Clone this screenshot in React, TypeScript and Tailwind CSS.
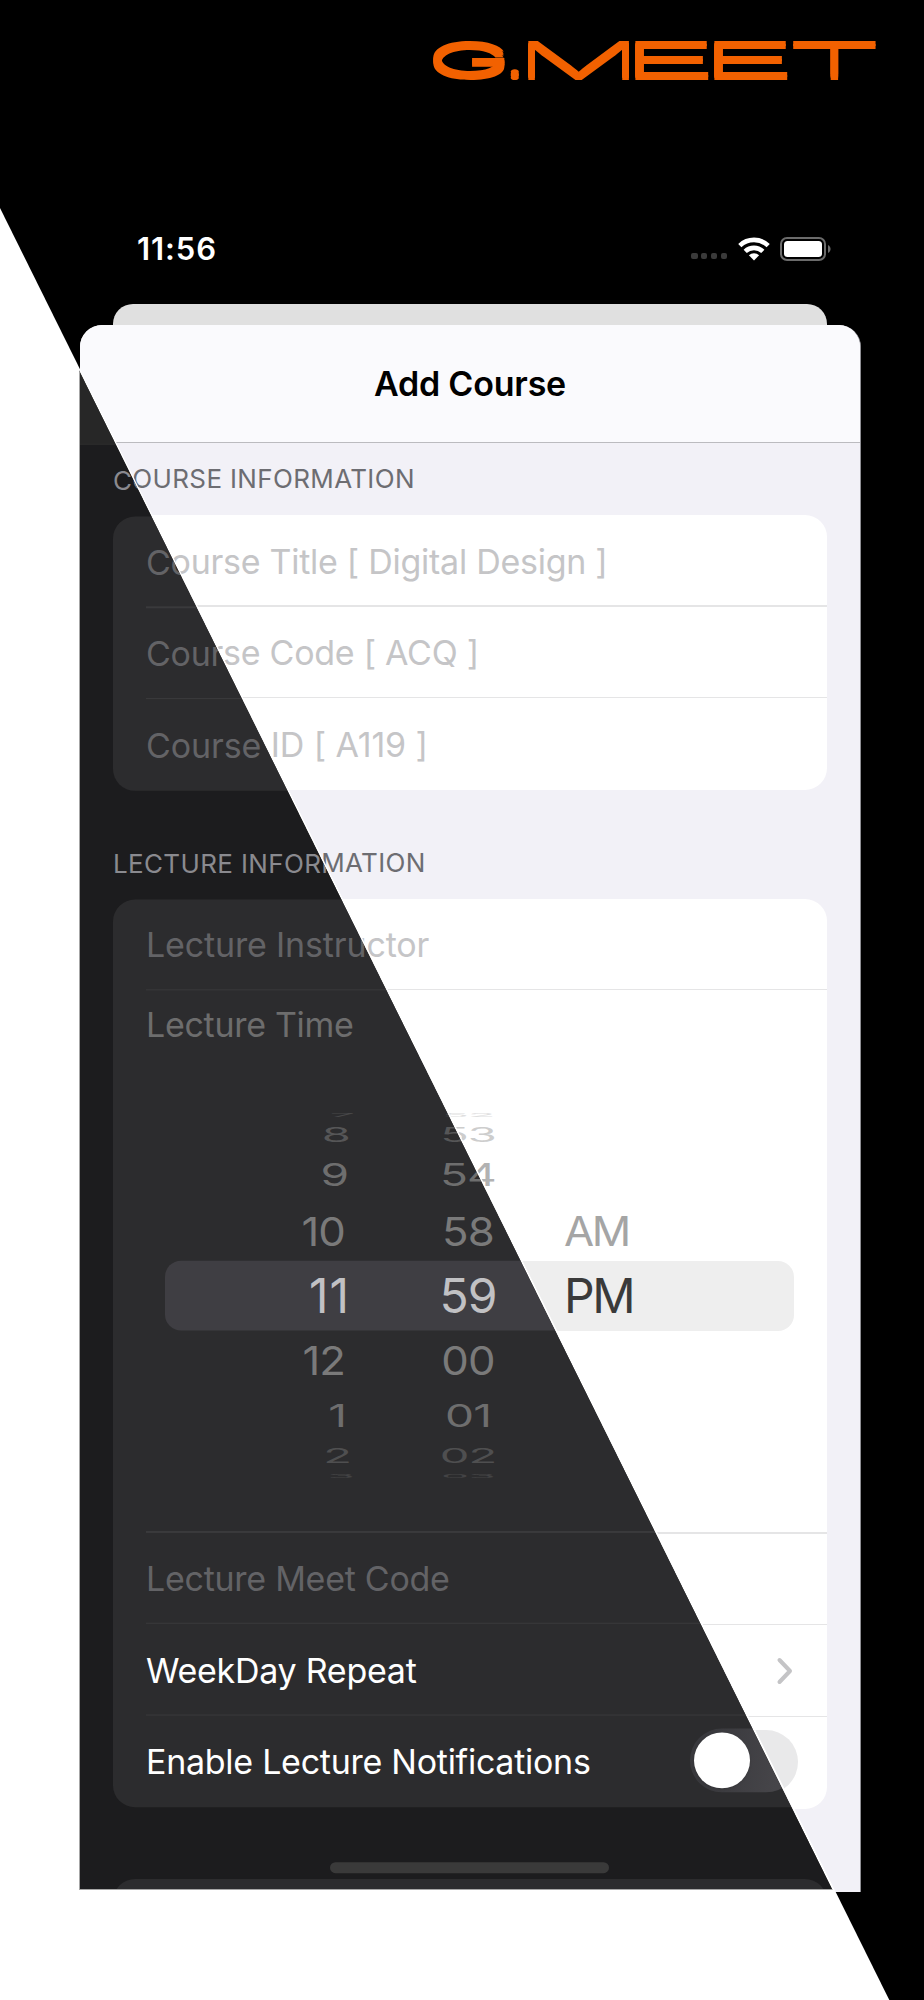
import { ReactNode } from "react";
import clsx from "clsx";

type Theme = {
  sheet: string;
  header: string;
  title: string;
  section: string;
  group: string;
  line: string;
  placeholder: string;
  caption: string;
  text: string;
  band: string;
  wheel: string;
  selected: string;
  track: string;
};

const LIGHT: Theme = {
  sheet: "bg-[#f2f1f7] border-r border-[#8f8f94]",
  header: "bg-[#fafafd] border-[#bbbbbf]",
  title: "text-black",
  section: "text-[#6d6d72]",
  group: "bg-white",
  line: "bg-[#e5e5e6]",
  placeholder: "text-[#c5c5c7]",
  caption: "text-[#a0a0a0]",
  text: "text-black",
  band: "bg-[#eeeeee]",
  wheel: "text-[#a5a5a5]",
  selected: "text-[#3a3a3a]",
  track: "bg-[#e9e9ea]",
};

const DARK: Theme = {
  sheet: "bg-[#1c1c1e] border-r border-[#1c1c1e]",
  header: "bg-[#272727] border-[#2c2c2d]",
  title: "text-white",
  section: "text-[#8a8a8f]",
  group: "bg-[#2c2c2e]",
  line: "bg-[#3a3a3c]",
  placeholder: "text-[#636366]",
  caption: "text-[#6d6d6d]",
  text: "text-white",
  band: "bg-[#3f3e43]",
  wheel: "text-[#7a7a7a]",
  selected: "text-[#c1c1c4]",
  track: "bg-[linear-gradient(100deg,#39393d_20%,#464549_80%)]",
};

// slot height, glyph scale and opacity for each step round the wheel
const SLOTS = [
  { box: "h-[14px]", glyph: "scale-x-[0.93] scale-y-[0.11] opacity-35" },
  { box: "h-[26px]", glyph: "scale-x-[0.98] scale-y-[0.41] opacity-55" },
  { box: "h-[54px]", glyph: "scale-x-[0.96] scale-y-[0.66] opacity-85" },
  { box: "h-[59px]", glyph: "scale-x-[0.91] scale-y-[0.84]" },
  { box: "h-[70px]", glyph: "scale-100" },
  { box: "h-[59px]", glyph: "scale-x-[0.91] scale-y-[0.84]" },
  { box: "h-[54px]", glyph: "scale-x-[0.96] scale-y-[0.66] opacity-85" },
  { box: "h-[26px]", glyph: "scale-x-[0.98] scale-y-[0.41] opacity-45" },
  { box: "h-[14px]", glyph: "scale-x-[0.93] scale-y-[0.11] opacity-30" },
];

const HOURS = ["7", "8", "9", "10", "11", "12", "1", "2", "3"];
const HOUR_SHIFT = ["pr-0", "pr-1", "pr-1.5", "pr-[9px]", "pr-[4px]", "pr-[9px]", "pr-2", "pr-[3px]", "pr-0"];
const MINUTES = ["52", "53", "54", "58", "59", "00", "01", "02", "03"];
const PERIODS = ["", "", "", "AM", "PM", "", "", "", ""];

function Wheel({ t, items, className, shift, origin }: { t: Theme; items: string[]; className: string; shift?: string[]; origin: string }) {
  return (
    <div className={clsx("flex flex-col", className)}>
      {items.map((v, i) => (
        <div key={i} className={clsx("flex items-center", SLOTS[i].box, shift?.[i])}>
          <span
            className={clsx(
              "flex-1 text-[48px] leading-none",
              v === "11" && "tracking-[1px]",
              origin,
              SLOTS[i].glyph,
              i === 4 ? t.selected : t.wheel
            )}
          >
            {v}
          </span>
        </div>
      ))}
    </div>
  );
}

function Row({ t, last, children }: { t: Theme; last?: boolean; children: ReactNode }) {
  return (
    <div className="h-[91.6px] flex flex-col pl-[33px]">
      <div className="flex-1 flex items-center pt-[3px] text-[34px] leading-none tracking-[-0.27px] whitespace-nowrap">{children}</div>
      {!last && <div className={clsx("h-[1.5px]", t.line)} />}
    </div>
  );
}

function Section({ t, className, children }: { t: Theme; className: string; children: ReactNode }) {
  return (
    <div className={clsx("flex items-end pl-[33px] text-[26px] leading-[72px] tracking-[0.35px]", t.section, className)}>
      {children}
    </div>
  );
}

function Sheet({ t }: { t: Theme }) {
  return (
    <div className={clsx("w-[781px] h-[1567px] rounded-t-[22px] overflow-hidden flex flex-col", t.sheet)}>
      <div className={clsx("h-[118px] shrink-0 border-b flex items-center justify-center text-[34px] font-semibold tracking-[-0.2px]", t.header, t.title)}>
        Add Course
      </div>

      <Section t={t} className="h-[72px] shrink-0">COURSE INFORMATION</Section>
      <div className={clsx("mx-[33px] shrink-0 rounded-[22px] overflow-hidden", t.group)}>
        <Row t={t}><span className={t.placeholder}>Course Title [ Digital Design ]</span></Row>
        <Row t={t}><span className={t.placeholder}>Course Code [ ACQ ]</span></Row>
        <Row t={t} last><span className={clsx("tracking-[-0.1px]", t.placeholder)}>Course ID [ A119 ]</span></Row>
      </div>

      <Section t={t} className="h-[109px] shrink-0">LECTURE INFORMATION</Section>
      <div className={clsx("mx-[33px] shrink-0 rounded-[22px] overflow-hidden", t.group)}>
        <Row t={t}><span className={clsx("tracking-[-0.15px]", t.placeholder)}>Lecture Instructor</span></Row>
        <div className="h-[543.5px] flex flex-col pl-[33px]">
          <div className={clsx("pt-[18px] text-[34px] leading-[34px] tracking-[-0.3px]", t.caption)}>Lecture Time</div>
          <div className="mt-[66px] w-[648px] grid">
            <div className={clsx("col-start-1 row-start-1 self-center ml-[19px] w-[629px] h-[70px] rounded-[16px]", t.band)} />
            <div className="col-start-1 row-start-1 flex">
              <Wheel t={t} items={HOURS} shift={HOUR_SHIFT} className="w-[208px] text-right tracking-[-1px]" origin="origin-right" />
              <Wheel t={t} items={MINUTES} className="ml-[72px] w-[84px] text-center tracking-[-1px]" origin="origin-center" />
              <Wheel t={t} items={PERIODS} className="ml-[54px] w-[120px] tracking-[-2.5px]" origin="origin-left" />
            </div>
          </div>
          <div className={clsx("mt-auto h-[1.5px]", t.line)} />
        </div>
        <Row t={t}><span className={t.placeholder}>Lecture Meet Code</span></Row>
        <Row t={t}>
          <span className={t.text}>WeekDay Repeat</span>
          <svg className="ml-auto mr-[34px] -mt-[2px]" width="17" height="28" viewBox="0 0 17 28" fill="none" stroke="#c4c4c6" strokeWidth="4" strokeLinecap="round" strokeLinejoin="round">
            <path d="M3.5 3 14 14 3.5 25" />
          </svg>
        </Row>
        <Row t={t} last>
          <span className={t.text}>Enable Lecture Notifications</span>
          <span className={clsx("ml-auto mr-[29px] -mt-[4px] w-[108px] h-[64px] rounded-full p-1 flex", t.track)}>
            <span className="size-[56px] rounded-full bg-white shadow" />
          </span>
        </Row>
      </div>

      <div className="mt-[55px] ml-[250px] w-[279px] h-[11px] shrink-0 rounded-full bg-[#3a3a3a]" />
      <div className={clsx("mt-[6px] mx-[33px] h-[60px] shrink-0 rounded-[22px]", t.group)} />
    </div>
  );
}

// thin strokes widened by the scale, thickened vertically by the shadow
const LOGO = [
  { c: "G", box: "w-[78px]", glyph: "scale-x-[2.58] font-light" },
  { c: ".", box: "w-[9px]", glyph: "scale-x-[1.7] font-light" },
  { c: "M", box: "w-[104px]", glyph: "scale-x-[3.25] font-extralight" },
  { c: "E", box: "w-[79px]", glyph: "scale-x-[3.9] font-extralight" },
  { c: "E", box: "w-[88px]", glyph: "scale-x-[3.9] font-extralight" },
  { c: "T", box: "w-[90px]", glyph: "scale-x-[3.58] font-extralight" },
];

function Logo() {
  return (
    <h1 className="mt-[31px] ml-[426px] h-[59px] flex text-[45px] leading-[60px] text-[#f26100] [text-shadow:0_2.6px_0_#f26100,0_-2.6px_0_#f26100,0_1.2px_0_#f26100,0_-1.2px_0_#f26100]">
      {LOGO.map((l, i) => (
        <span key={i} className={clsx("flex", l.box)}>
          <span className={clsx("origin-left", l.glyph)}>{l.c}</span>
        </span>
      ))}
    </h1>
  );
}

function StatusBar() {
  return (
    <div className="mt-[128px] h-[62px] pl-[137px] pr-[92px] pb-[1px] flex items-center text-white">
      <span className="text-[31px] font-semibold leading-none tracking-[0.9px]">11:56</span>
      <div className="ml-auto flex items-center">
        <div className="flex gap-[3.5px] mt-[15px] mr-[11px]">
          {[0, 1, 2, 3].map((d) => (
            <span key={d} className="size-[6.3px] rounded-[2px] bg-[#3a3a3a]" />
          ))}
        </div>
        <svg width="32" height="24" viewBox="0 0 32 24" fill="none" stroke="white" strokeWidth="4.6">
          <path d="M1.8 8.6a20.5 20.5 0 0 1 28.4 0" />
          <path d="M7.2 14.4a12.7 12.7 0 0 1 17.6 0" />
          <path d="M16 23.5l-5.1-5.2a7.3 7.3 0 0 1 10.2 0z" fill="white" stroke="none" />
        </svg>
        <svg className="ml-[10px]" width="52" height="24" viewBox="0 0 52 24">
          <rect x="1" y="1" width="44" height="22" rx="6" fill="none" stroke="#6b6b6b" strokeWidth="2" />
          <rect x="4" y="4" width="38" height="16" rx="3.5" fill="white" />
          <path d="M48 8c3.4 1.4 3.4 6.6 0 8z" fill="#6b6b6b" />
        </svg>
      </div>
    </div>
  );
}

export default function App() {
  return (
    <div className="w-[924px] h-[2000px] bg-black grid overflow-hidden font-['Inter','Liberation_Sans',sans-serif]">
      <div className="col-start-1 row-start-1 h-[2000px] flex flex-col">
        <Logo />
        <StatusBar />
        <div className="mt-[24px] ml-[113px] w-[714px] h-[21px] shrink-0 rounded-t-[20px] bg-[#e0e0e0]" />
        <div className="ml-[80px]">
          <Sheet t={LIGHT} />
        </div>
      </div>

      {/* white half, then the dark sheet just inside its edge */}
      <div className="col-start-1 row-start-1 h-[2000px] bg-white [clip-path:polygon(0_208px,889.3px_2000px,0_2000px)]" />
      <div aria-hidden className="col-start-1 row-start-1 h-[2000px] [clip-path:polygon(0_211px,887px_2000px,0_2000px)]">
        <div className="mt-[327px] ml-[79px] w-[782px] h-[1563px] overflow-hidden border-l border-b border-[#a6a6a6] bg-[#1c1c1e]">
          <div className="origin-top scale-y-[0.9975]">
            <Sheet t={DARK} />
          </div>
        </div>
      </div>
    </div>
  );
}
